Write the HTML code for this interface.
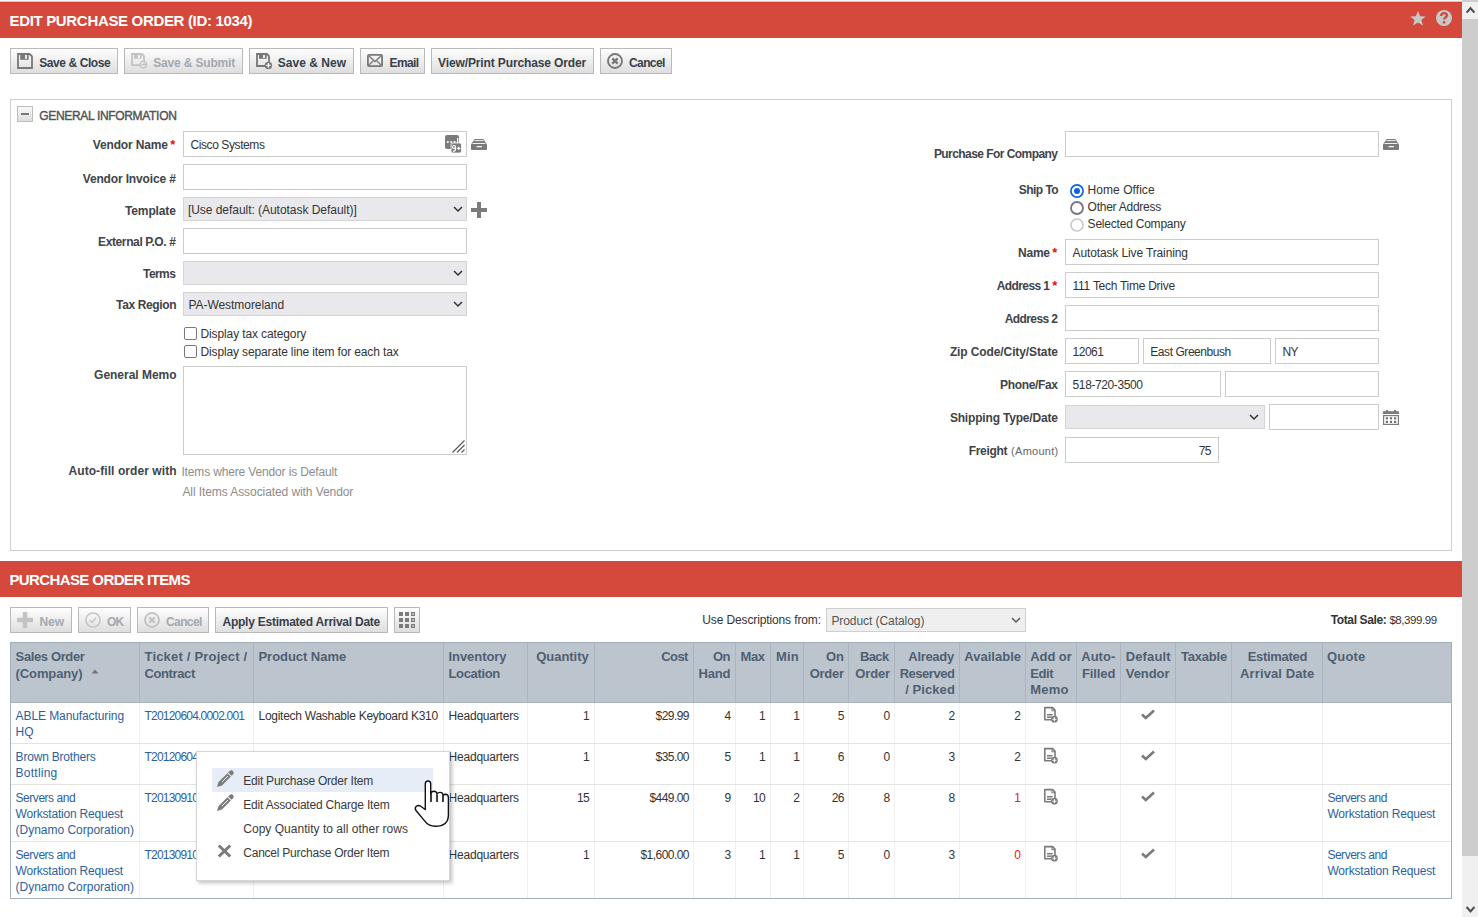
<!DOCTYPE html>
<html><head><meta charset="utf-8"><title>Edit Purchase Order</title>
<style>
html,body{margin:0;padding:0;background:#fff;overflow:hidden;width:1478px;height:917px}
body{position:relative;font-family:"Liberation Sans",sans-serif}
body>div,body>span,body>svg{position:absolute;display:block;box-sizing:border-box}
body>span{white-space:nowrap}
</style></head><body>
<div style="left:0px;top:0px;width:1462px;height:1px;background:#f4f6f7"></div>
<div style="left:0px;top:1px;width:1462px;height:1px;background:#c9d1d4"></div>
<div style="left:0px;top:2px;width:1462px;height:36px;background:#d4493b"></div>
<div style="left:0px;top:2px;width:1462px;height:1px;background:#d63d31"></div>
<span style="left:9.50px;top:12.00px;font-size:15px;line-height:18px;font-weight:bold;color:#fff;letter-spacing:-0.329px;">EDIT PURCHASE ORDER (ID: 1034)</span>
<svg style="left:1409px;top:10px" width="18" height="17" viewBox="0 0 18 17"><path d="M9 1 L11.2 6.3 L16.8 6.5 L12.4 10 L14 15.6 L9 12.4 L4 15.6 L5.6 10 L1.2 6.5 L6.8 6.3 Z" fill="#c8c8c8"/></svg>
<svg style="left:1436px;top:10px" width="16" height="16" viewBox="0 0 16 16"><circle cx="8" cy="8" r="8" fill="#c8c8c8"/><path d="M5.1 6.1 C5.1 4.2 6.5 3.1 8 3.1 C9.7 3.1 10.9 4.2 10.9 5.6 C10.9 7.5 8.1 7.6 8.1 9.6" stroke="#d4493b" stroke-width="2.3" fill="none"/><circle cx="8.1" cy="12.3" r="1.35" fill="#d4493b"/></svg>
<div style="left:1462px;top:0px;width:16px;height:917px;background:#cdcdcd"></div>
<div style="left:1462px;top:2px;width:16px;height:17px;background:#f0f0f0"></div>
<div style="left:1462px;top:856px;width:16px;height:61px;background:#f0f0f0"></div>
<svg style="left:1462px;top:2px" width="16" height="17" viewBox="0 0 16 17"><path d="M4.6 10.6 L8.5 6.2 L12.4 10.6" stroke="#505050" stroke-width="2.1" fill="none"/></svg>
<svg style="left:1462px;top:900px" width="16" height="17" viewBox="0 0 16 17"><path d="M4.6 7 L8.5 11.4 L12.4 7" stroke="#505050" stroke-width="2.1" fill="none"/></svg>
<div style="left:10px;top:48px;width:108px;height:26px;border:1px solid #b9b9b9;box-sizing:border-box;background:linear-gradient(#fefefe,#dedede)"></div>
<svg style="left:16px;top:52px" width="19" height="19" viewBox="0 0 19 19"><path d="M2 2 H13.6 L16 4.4 V16 H2 Z" stroke="#787878" stroke-width="1.8" fill="none"/><rect x="4.2" y="2" width="8.5" height="5.8" fill="#787878"/><rect x="9" y="3" width="1.9" height="3.8" fill="#f6f6f6"/></svg>
<span style="left:39.20px;top:56.00px;font-size:12px;line-height:14px;font-weight:bold;color:#38404a;letter-spacing:-0.415px;">Save &amp; Close</span>
<div style="left:124px;top:48px;width:119px;height:26px;border:1px solid #b9b9b9;box-sizing:border-box;background:linear-gradient(#fefefe,#dedede)"></div>
<svg style="left:130px;top:52px" width="19" height="19" viewBox="0 0 19 19"><path d="M10 13.1 H2 V2 H12 L14 4 V9.2" stroke="#c3c3c3" stroke-width="1.8" fill="none"/><rect x="4" y="2" width="7.7" height="4.6" fill="#c3c3c3"/><rect x="8" y="3" width="1.9" height="3" fill="#f4f4f4"/><circle cx="13.4" cy="12.6" r="3.3" stroke="#c3c3c3" stroke-width="1.3" fill="#ececec"/><path d="M11.2 12.6 H15.4 M13.6 10.8 L15.4 12.6 L13.6 14.4" stroke="#c3c3c3" stroke-width="1.1" fill="none"/></svg>
<span style="left:153.20px;top:56.00px;font-size:12px;line-height:14px;font-weight:bold;color:#a3a9b0;letter-spacing:-0.161px;">Save &amp; Submit</span>
<div style="left:249px;top:48px;width:105px;height:26px;border:1px solid #b9b9b9;box-sizing:border-box;background:linear-gradient(#fefefe,#dedede)"></div>
<svg style="left:255px;top:52px" width="19" height="19" viewBox="0 0 19 19"><path d="M10.5 14 H2 V2 H12 L14 4 V10.2" stroke="#787878" stroke-width="1.8" fill="none"/><rect x="4" y="2" width="7.7" height="4.8" fill="#787878"/><rect x="8" y="3" width="1.9" height="3" fill="#f4f4f4"/><circle cx="13.4" cy="13.4" r="3.7" fill="#787878"/><path d="M13.4 11.1 V15.7 M11.1 13.4 H15.7" stroke="#f2f2f2" stroke-width="1.4"/></svg>
<span style="left:277.80px;top:56.00px;font-size:12px;line-height:14px;font-weight:bold;color:#38404a;letter-spacing:0.022px;">Save &amp; New</span>
<div style="left:360px;top:48px;width:65px;height:26px;border:1px solid #b9b9b9;box-sizing:border-box;background:linear-gradient(#fefefe,#dedede)"></div>
<svg style="left:367px;top:54px" width="16" height="13" viewBox="0 0 16 13"><rect x="0.9" y="0.9" width="14.2" height="11.2" rx="1.2" stroke="#787878" stroke-width="1.8" fill="none"/><path d="M2 2 L8 7.5 L14 2 M1.5 11.5 L6 7 M14.5 11.5 L10 7" stroke="#787878" stroke-width="1.3" fill="none"/></svg>
<span style="left:389.50px;top:56.00px;font-size:12px;line-height:14px;font-weight:bold;color:#38404a;letter-spacing:-0.600px;">Email</span>
<div style="left:431px;top:48px;width:163px;height:26px;border:1px solid #b9b9b9;box-sizing:border-box;background:linear-gradient(#fefefe,#dedede)"></div>
<span style="left:438.10px;top:56.00px;font-size:12px;line-height:14px;font-weight:bold;color:#38404a;letter-spacing:-0.129px;">View/Print Purchase Order</span>
<div style="left:600px;top:48px;width:72px;height:26px;border:1px solid #b9b9b9;box-sizing:border-box;background:linear-gradient(#fefefe,#dedede)"></div>
<svg style="left:607px;top:53px" width="16" height="16" viewBox="0 0 16 16"><circle cx="8" cy="8" r="7" stroke="#787878" stroke-width="1.9" fill="none"/><path d="M5.3 5.3 L10.7 10.7 M10.7 5.3 L5.3 10.7" stroke="#787878" stroke-width="2.4"/></svg>
<span style="left:629.00px;top:56.00px;font-size:12px;line-height:14px;font-weight:bold;color:#38404a;letter-spacing:-0.600px;">Cancel</span>
<div style="left:10px;top:99px;width:1442px;height:452px;border:1px solid #cfcfcf"></div>
<div style="left:17px;top:106px;width:16px;height:16px;border:1px solid #bdbdbd;background:linear-gradient(#fafafa,#dcdcdc)"></div>
<div style="left:21px;top:113px;width:8px;height:2px;background:#777"></div>
<span style="left:39.20px;top:109.00px;font-size:12px;line-height:14px;font-weight:normal;color:#4f5458;letter-spacing:-0.318px;-webkit-text-stroke:0.4px #4f5458;">GENERAL INFORMATION</span>
<span style="left:92.80px;top:138.00px;font-size:12px;line-height:14px;font-weight:bold;color:#404348;letter-spacing:-0.162px;">Vendor Name</span>
<span style="left:170.20px;top:137.00px;font-size:13px;line-height:16px;font-weight:bold;color:#e01010;letter-spacing:0.000px;">*</span>
<div style="left:183px;top:131px;width:284px;height:26px;border:1px solid #cccccc;background:#fff"></div>
<span style="left:190.50px;top:138.00px;font-size:12px;line-height:14px;font-weight:normal;color:#333333;letter-spacing:-0.412px;">Cisco Systems</span>
<svg style="left:445px;top:135px" width="17" height="18" viewBox="0 0 17 18"><rect x="0" y="0" width="14" height="14" rx="2" fill="#7b7b7b"/><circle cx="2.8" cy="7" r="1.1" fill="#fff"/><circle cx="6.2" cy="7" r="1.1" fill="#fff"/><circle cx="9.6" cy="7" r="1.1" fill="#fff"/><rect x="12" y="3" width="1.3" height="5" fill="#fff"/><rect x="6" y="8" width="10.5" height="10" rx="2" fill="#7b7b7b" stroke="#fff" stroke-width="0.8"/><circle cx="9" cy="12" r="1.5" stroke="#fff" stroke-width="1.2" fill="none"/><path d="M10.5 12 V14 Q10.5 16.3 8 16.1" stroke="#fff" stroke-width="1.2" fill="none"/><path d="M12 13.4 H15.4 M13.7 11.7 V15.1" stroke="#fff" stroke-width="1.2"/></svg>
<svg style="left:471px;top:139px" width="16" height="12" viewBox="0 0 16 12"><path d="M3.6 0 H12.4 L16 5.6 V10.2 Q16 11 15.2 11 H0.8 Q0 11 0 10.2 V5.6 Z" fill="#7b7b7b"/><path d="M3.4 1.6 H12.6 M1.6 4.5 H14.4" stroke="#fff" stroke-width="0.9"/><rect x="5.6" y="7" width="5.2" height="1.2" fill="#fff"/></svg>
<span style="left:82.70px;top:172.00px;font-size:12px;line-height:14px;font-weight:bold;color:#404348;letter-spacing:-0.146px;">Vendor Invoice #</span>
<div style="left:183px;top:164px;width:284px;height:26px;border:1px solid #cccccc;background:#fff"></div>
<span style="left:125.00px;top:204.00px;font-size:12px;line-height:14px;font-weight:bold;color:#404348;letter-spacing:-0.131px;">Template</span>
<div style="left:183px;top:197px;width:284px;height:24px;border:1px solid #d4d4d4;background:#e9e9ed"></div>
<svg style="left:453px;top:205.0px" width="10" height="8" viewBox="0 0 10 8"><path d="M1 2 L5 6 L9 2" stroke="#333" stroke-width="1.5" fill="none"/></svg>
<span style="left:187.90px;top:203.00px;font-size:12px;line-height:14px;font-weight:normal;color:#333333;letter-spacing:-0.039px;">[Use default: (Autotask Default)]</span>
<svg style="left:471px;top:202px" width="16" height="16" viewBox="0 0 16 16"><rect x="6" y="0" width="4" height="16" fill="#7b7b7b"/><rect x="0" y="6" width="16" height="4" fill="#7b7b7b"/></svg>
<span style="left:98.00px;top:235.00px;font-size:12px;line-height:14px;font-weight:bold;color:#404348;letter-spacing:-0.377px;">External P.O. #</span>
<div style="left:183px;top:228px;width:284px;height:26px;border:1px solid #cccccc;background:#fff"></div>
<span style="left:143.10px;top:267.00px;font-size:12px;line-height:14px;font-weight:bold;color:#404348;letter-spacing:-0.588px;">Terms</span>
<div style="left:183px;top:261px;width:284px;height:24px;border:1px solid #d4d4d4;background:#e9e9ed"></div>
<svg style="left:453px;top:269.0px" width="10" height="8" viewBox="0 0 10 8"><path d="M1 2 L5 6 L9 2" stroke="#333" stroke-width="1.5" fill="none"/></svg>
<span style="left:116.10px;top:298.00px;font-size:12px;line-height:14px;font-weight:bold;color:#404348;letter-spacing:-0.373px;">Tax Region</span>
<div style="left:183px;top:292px;width:284px;height:24px;border:1px solid #d4d4d4;background:#e9e9ed"></div>
<svg style="left:453px;top:300.0px" width="10" height="8" viewBox="0 0 10 8"><path d="M1 2 L5 6 L9 2" stroke="#333" stroke-width="1.5" fill="none"/></svg>
<span style="left:188.40px;top:298.00px;font-size:12px;line-height:14px;font-weight:normal;color:#333333;letter-spacing:-0.042px;">PA-Westmoreland</span>
<div style="left:184px;top:327px;width:13px;height:13px;border:1.6px solid #76768a;border-radius:2px;background:#fff"></div>
<span style="left:200.50px;top:327.00px;font-size:12px;line-height:14px;font-weight:normal;color:#333333;letter-spacing:-0.118px;">Display tax category</span>
<div style="left:184px;top:345px;width:13px;height:13px;border:1.6px solid #76768a;border-radius:2px;background:#fff"></div>
<span style="left:200.50px;top:345.00px;font-size:12px;line-height:14px;font-weight:normal;color:#333333;letter-spacing:-0.138px;">Display separate line item for each tax</span>
<span style="left:94.10px;top:368.00px;font-size:12px;line-height:14px;font-weight:bold;color:#404348;letter-spacing:-0.024px;">General Memo</span>
<div style="left:183px;top:366px;width:284px;height:89px;border:1px solid #cccccc;background:#fff"></div>
<svg style="left:450px;top:438px" width="16" height="16" viewBox="0 0 16 16"><path d="M14.5 2.5 L2.5 14.5 M14.5 7 L7 14.5 M14.5 11.5 L11.5 14.5" stroke="#555" stroke-width="1.1"/></svg>
<span style="left:68.50px;top:464.00px;font-size:12px;line-height:14px;font-weight:bold;color:#404348;letter-spacing:0.073px;">Auto-fill order with</span>
<span style="left:181.40px;top:465.00px;font-size:12px;line-height:14px;font-weight:normal;color:#8c8c8c;letter-spacing:-0.148px;">Items where Vendor is Default</span>
<span style="left:182.40px;top:485.00px;font-size:12px;line-height:14px;font-weight:normal;color:#8c8c8c;letter-spacing:-0.080px;">All Items Associated with Vendor</span>
<span style="left:933.90px;top:147.00px;font-size:12px;line-height:14px;font-weight:bold;color:#404348;letter-spacing:-0.559px;">Purchase For Company</span>
<div style="left:1065px;top:131px;width:314px;height:26px;border:1px solid #cccccc;background:#fff"></div>
<svg style="left:1383px;top:139px" width="16" height="12" viewBox="0 0 16 12"><path d="M3.6 0 H12.4 L16 5.6 V10.2 Q16 11 15.2 11 H0.8 Q0 11 0 10.2 V5.6 Z" fill="#7b7b7b"/><path d="M3.4 1.6 H12.6 M1.6 4.5 H14.4" stroke="#fff" stroke-width="0.9"/><rect x="5.6" y="7" width="5.2" height="1.2" fill="#fff"/></svg>
<span style="left:1018.80px;top:183.00px;font-size:12px;line-height:14px;font-weight:bold;color:#404348;letter-spacing:-0.545px;">Ship To</span>
<svg style="left:1070px;top:184px" width="14" height="14" viewBox="0 0 14 14"><circle cx="7" cy="7" r="6.1" stroke="#0d62e4" stroke-width="1.7" fill="#fff"/><circle cx="7" cy="7" r="3" fill="#0d62e4"/></svg>
<span style="left:1087.60px;top:183.00px;font-size:12px;line-height:14px;font-weight:normal;color:#333333;letter-spacing:0.051px;">Home Office</span>
<svg style="left:1070px;top:201px" width="14" height="14" viewBox="0 0 14 14"><circle cx="7" cy="7" r="6" stroke="#767688" stroke-width="1.8" fill="#fff"/></svg>
<span style="left:1087.60px;top:200.00px;font-size:12px;line-height:14px;font-weight:normal;color:#333333;letter-spacing:-0.256px;">Other Address</span>
<svg style="left:1070px;top:218px" width="14" height="14" viewBox="0 0 14 14"><circle cx="7" cy="7" r="6" stroke="#c6c6ce" stroke-width="1.6" fill="#fff"/></svg>
<span style="left:1087.60px;top:217.00px;font-size:12px;line-height:14px;font-weight:normal;color:#333333;letter-spacing:-0.213px;">Selected Company</span>
<span style="left:1018.10px;top:246.00px;font-size:12px;line-height:14px;font-weight:bold;color:#404348;letter-spacing:-0.270px;">Name</span>
<span style="left:1052.30px;top:245.00px;font-size:13px;line-height:16px;font-weight:bold;color:#e01010;letter-spacing:0.000px;">*</span>
<div style="left:1065px;top:239px;width:314px;height:26px;border:1px solid #cccccc;background:#fff"></div>
<span style="left:1072.50px;top:246.00px;font-size:12px;line-height:14px;font-weight:normal;color:#333333;letter-spacing:-0.124px;">Autotask Live Training</span>
<span style="left:996.75px;top:279.00px;font-size:12px;line-height:14px;font-weight:bold;color:#404348;letter-spacing:-0.600px;">Address 1</span>
<span style="left:1052.30px;top:278.00px;font-size:13px;line-height:16px;font-weight:bold;color:#e01010;letter-spacing:0.000px;">*</span>
<div style="left:1065px;top:272px;width:314px;height:26px;border:1px solid #cccccc;background:#fff"></div>
<span style="left:1072.60px;top:279.00px;font-size:12px;line-height:14px;font-weight:normal;color:#333333;letter-spacing:-0.269px;">111 Tech Time Drive</span>
<span style="left:1004.75px;top:312.00px;font-size:12px;line-height:14px;font-weight:bold;color:#404348;letter-spacing:-0.600px;">Address 2</span>
<div style="left:1065px;top:305px;width:314px;height:26px;border:1px solid #cccccc;background:#fff"></div>
<span style="left:949.90px;top:345.00px;font-size:12px;line-height:14px;font-weight:bold;color:#404348;letter-spacing:-0.108px;">Zip Code/City/State</span>
<div style="left:1065px;top:338px;width:74px;height:26px;border:1px solid #cccccc;background:#fff"></div>
<span style="left:1072.60px;top:345.00px;font-size:12px;line-height:14px;font-weight:normal;color:#333333;letter-spacing:-0.500px;">12061</span>
<div style="left:1143px;top:338px;width:128px;height:26px;border:1px solid #cccccc;background:#fff"></div>
<span style="left:1150.30px;top:345.00px;font-size:12px;line-height:14px;font-weight:normal;color:#333333;letter-spacing:-0.442px;">East Greenbush</span>
<div style="left:1275px;top:338px;width:104px;height:26px;border:1px solid #cccccc;background:#fff"></div>
<span style="left:1282.40px;top:345.00px;font-size:12px;line-height:14px;font-weight:normal;color:#333333;letter-spacing:-0.600px;">NY</span>
<span style="left:1000.00px;top:378.00px;font-size:12px;line-height:14px;font-weight:bold;color:#404348;letter-spacing:-0.338px;">Phone/Fax</span>
<div style="left:1065px;top:371px;width:156px;height:26px;border:1px solid #cccccc;background:#fff"></div>
<span style="left:1072.60px;top:378.00px;font-size:12px;line-height:14px;font-weight:normal;color:#333333;letter-spacing:-0.400px;">518-720-3500</span>
<div style="left:1225px;top:371px;width:154px;height:26px;border:1px solid #cccccc;background:#fff"></div>
<span style="left:949.90px;top:411.00px;font-size:12px;line-height:14px;font-weight:bold;color:#404348;letter-spacing:-0.179px;">Shipping Type/Date</span>
<div style="left:1065px;top:405px;width:200px;height:24px;border:1px solid #d4d4d4;background:#e9e9ed"></div>
<svg style="left:1249px;top:413.0px" width="10" height="8" viewBox="0 0 10 8"><path d="M1 2 L5 6 L9 2" stroke="#333" stroke-width="1.5" fill="none"/></svg>
<div style="left:1269px;top:404px;width:110px;height:26px;border:1px solid #cccccc;background:#fff"></div>
<svg style="left:1383px;top:410px" width="16" height="15" viewBox="0 0 16 15"><rect x="3" y="0" width="2" height="2" fill="#7b7b7b"/><rect x="11" y="0" width="2" height="2" fill="#7b7b7b"/><rect x="0" y="1.2" width="16" height="2.8" fill="#7b7b7b"/><rect x="0.6" y="5.6" width="14.8" height="8.8" stroke="#7b7b7b" stroke-width="1.2" fill="none"/><g fill="#707070"><rect x="2.8" y="7.2" width="2.2" height="2.2"/><rect x="6.9" y="7.2" width="2.2" height="2.2"/><rect x="11" y="7.2" width="2.2" height="2.2"/><rect x="2.8" y="10.8" width="2.2" height="2.2"/><rect x="6.9" y="10.8" width="2.2" height="2.2"/><rect x="11" y="10.8" width="2.2" height="2.2"/></g></svg>
<span style="left:968.80px;top:444.00px;font-size:12px;line-height:14px;font-weight:bold;color:#404348;letter-spacing:-0.345px;">Freight</span>
<span style="left:1011.10px;top:445.00px;font-size:11px;line-height:13px;font-weight:normal;color:#666;letter-spacing:0.275px;">(Amount)</span>
<div style="left:1065px;top:437px;width:154px;height:26px;border:1px solid #cccccc;background:#fff"></div>
<span style="left:1198.63px;top:444.00px;font-size:12px;line-height:14px;font-weight:normal;color:#333333;letter-spacing:-0.500px;">75</span>
<div style="left:0px;top:561px;width:1462px;height:36px;background:#d4493b"></div>
<span style="left:9.40px;top:571.00px;font-size:15px;line-height:18px;font-weight:bold;color:#fff;letter-spacing:-0.600px;">PURCHASE ORDER ITEMS</span>
<div style="left:10px;top:607px;width:62px;height:26px;border:1px solid #b9b9b9;box-sizing:border-box;background:linear-gradient(#fefefe,#dedede)"></div>
<svg style="left:17px;top:612px" width="16" height="16" viewBox="0 0 16 16"><rect x="5.8" y="0" width="4.4" height="16" fill="#c3c3c3"/><rect x="0" y="5.8" width="16" height="4.4" fill="#c3c3c3"/></svg>
<span style="left:39.40px;top:615.00px;font-size:12px;line-height:14px;font-weight:bold;color:#a3a9b0;letter-spacing:0.030px;">New</span>
<div style="left:78px;top:607px;width:53px;height:26px;border:1px solid #b9b9b9;box-sizing:border-box;background:linear-gradient(#fefefe,#dedede)"></div>
<svg style="left:85px;top:612px" width="16" height="16" viewBox="0 0 16 16"><circle cx="8" cy="8" r="7.1" stroke="#c3c3c3" stroke-width="1.5" fill="none"/><path d="M4.8 8.2 L7 10.4 L11.2 5.6" stroke="#c3c3c3" stroke-width="1.3" fill="none"/></svg>
<span style="left:106.90px;top:615.00px;font-size:12px;line-height:14px;font-weight:bold;color:#a3a9b0;letter-spacing:-0.600px;">OK</span>
<div style="left:137px;top:607px;width:72px;height:26px;border:1px solid #b9b9b9;box-sizing:border-box;background:linear-gradient(#fefefe,#dedede)"></div>
<svg style="left:144px;top:612px" width="16" height="16" viewBox="0 0 16 16"><circle cx="8" cy="8" r="7" stroke="#c3c3c3" stroke-width="1.9" fill="none"/><path d="M5.3 5.3 L10.7 10.7 M10.7 5.3 L5.3 10.7" stroke="#c3c3c3" stroke-width="2.4"/></svg>
<span style="left:166.00px;top:615.00px;font-size:12px;line-height:14px;font-weight:bold;color:#a3a9b0;letter-spacing:-0.600px;">Cancel</span>
<div style="left:215px;top:607px;width:173px;height:26px;border:1px solid #b9b9b9;box-sizing:border-box;background:linear-gradient(#fefefe,#dedede)"></div>
<span style="left:222.50px;top:615.00px;font-size:12px;line-height:14px;font-weight:bold;color:#38404a;letter-spacing:-0.242px;">Apply Estimated Arrival Date</span>
<div style="left:394px;top:607px;width:26px;height:26px;border:1px solid #b9b9b9;box-sizing:border-box;background:linear-gradient(#fefefe,#dedede)"></div>
<svg style="left:399px;top:612px" width="16" height="16" viewBox="0 0 16 16"><g fill="#7b7b7b"><rect x="0" y="0" width="4" height="4"/><rect x="6" y="0" width="4" height="4"/><rect x="0" y="6" width="4" height="4"/><rect x="6" y="6" width="4" height="4"/><rect x="0" y="12" width="4" height="4"/><rect x="6" y="12" width="4" height="4"/></g><g stroke="#7b7b7b" stroke-width="1.3" fill="none"><rect x="12.6" y="0.6" width="2.8" height="2.8"/><rect x="12.6" y="6.6" width="2.8" height="2.8"/><rect x="12.6" y="12.6" width="2.8" height="2.8"/></g></svg>
<span style="left:702.30px;top:613.00px;font-size:12px;line-height:14px;font-weight:normal;color:#333333;letter-spacing:-0.125px;">Use Descriptions from:</span>
<div style="left:826px;top:608px;width:200px;height:24px;border:1px solid #cfcfcf;background:#efefef"></div>
<span style="left:831.40px;top:614.00px;font-size:12px;line-height:14px;font-weight:normal;color:#555;letter-spacing:-0.065px;">Product (Catalog)</span>
<svg style="left:1011px;top:616px" width="10" height="8" viewBox="0 0 10 8"><path d="M1 2 L5 6 L9 2" stroke="#555" stroke-width="1.4" fill="none"/></svg>
<span style="left:1330.70px;top:613.00px;font-size:12px;line-height:14px;font-weight:bold;color:#333;letter-spacing:-0.369px;">Total Sale:</span>
<span style="left:1389.40px;top:613.00px;font-size:11.5px;line-height:14px;font-weight:normal;color:#333;letter-spacing:-0.433px;">$8,399.99</span>
<div style="left:10px;top:642px;width:1442px;height:257px;background:#fff"></div>
<div style="left:10px;top:642px;width:1442px;height:61px;background:#bcc5cd"></div>
<div style="left:10px;top:642px;width:1442px;height:1px;background:#a3afba"></div>
<div style="left:10px;top:702px;width:1442px;height:1px;background:#a9b4be"></div>
<div style="left:139px;top:643px;width:1px;height:59px;background:#a9b4bf"></div>
<div style="left:139px;top:703px;width:1px;height:195px;background:#f0f0f0"></div>
<div style="left:253px;top:643px;width:1px;height:59px;background:#a9b4bf"></div>
<div style="left:253px;top:703px;width:1px;height:195px;background:#f0f0f0"></div>
<div style="left:443px;top:643px;width:1px;height:59px;background:#a9b4bf"></div>
<div style="left:443px;top:703px;width:1px;height:195px;background:#f0f0f0"></div>
<div style="left:527px;top:643px;width:1px;height:59px;background:#a9b4bf"></div>
<div style="left:527px;top:703px;width:1px;height:195px;background:#f0f0f0"></div>
<div style="left:594px;top:643px;width:1px;height:59px;background:#a9b4bf"></div>
<div style="left:594px;top:703px;width:1px;height:195px;background:#f0f0f0"></div>
<div style="left:693px;top:643px;width:1px;height:59px;background:#a9b4bf"></div>
<div style="left:693px;top:703px;width:1px;height:195px;background:#f0f0f0"></div>
<div style="left:735px;top:643px;width:1px;height:59px;background:#a9b4bf"></div>
<div style="left:735px;top:703px;width:1px;height:195px;background:#f0f0f0"></div>
<div style="left:770px;top:643px;width:1px;height:59px;background:#a9b4bf"></div>
<div style="left:770px;top:703px;width:1px;height:195px;background:#f0f0f0"></div>
<div style="left:803px;top:643px;width:1px;height:59px;background:#a9b4bf"></div>
<div style="left:803px;top:703px;width:1px;height:195px;background:#f0f0f0"></div>
<div style="left:848px;top:643px;width:1px;height:59px;background:#a9b4bf"></div>
<div style="left:848px;top:703px;width:1px;height:195px;background:#f0f0f0"></div>
<div style="left:894px;top:643px;width:1px;height:59px;background:#a9b4bf"></div>
<div style="left:894px;top:703px;width:1px;height:195px;background:#f0f0f0"></div>
<div style="left:959px;top:643px;width:1px;height:59px;background:#a9b4bf"></div>
<div style="left:959px;top:703px;width:1px;height:195px;background:#f0f0f0"></div>
<div style="left:1025px;top:643px;width:1px;height:59px;background:#a9b4bf"></div>
<div style="left:1025px;top:703px;width:1px;height:195px;background:#f0f0f0"></div>
<div style="left:1076px;top:643px;width:1px;height:59px;background:#a9b4bf"></div>
<div style="left:1076px;top:703px;width:1px;height:195px;background:#f0f0f0"></div>
<div style="left:1120px;top:643px;width:1px;height:59px;background:#a9b4bf"></div>
<div style="left:1120px;top:703px;width:1px;height:195px;background:#f0f0f0"></div>
<div style="left:1175px;top:643px;width:1px;height:59px;background:#a9b4bf"></div>
<div style="left:1175px;top:703px;width:1px;height:195px;background:#f0f0f0"></div>
<div style="left:1231px;top:643px;width:1px;height:59px;background:#a9b4bf"></div>
<div style="left:1231px;top:703px;width:1px;height:195px;background:#f0f0f0"></div>
<div style="left:1322px;top:643px;width:1px;height:59px;background:#a9b4bf"></div>
<div style="left:1322px;top:703px;width:1px;height:195px;background:#f0f0f0"></div>
<div style="left:11px;top:743px;width:1440px;height:1px;background:#e3e3e3"></div>
<div style="left:11px;top:784px;width:1440px;height:1px;background:#e3e3e3"></div>
<div style="left:11px;top:841px;width:1440px;height:1px;background:#e3e3e3"></div>
<div style="left:10px;top:642px;width:1px;height:257px;background:#a3afba"></div>
<div style="left:1451px;top:642px;width:1px;height:257px;background:#a3afba"></div>
<div style="left:10px;top:898px;width:1442px;height:1px;background:#a3afba"></div>
<span style="left:15.60px;top:649.00px;font-size:13px;line-height:16px;font-weight:bold;color:#4f5f73;letter-spacing:-0.373px;">Sales Order</span>
<span style="left:15.60px;top:666.00px;font-size:13px;line-height:16px;font-weight:bold;color:#4f5f73;letter-spacing:-0.120px;">(Company)</span>
<svg style="left:91px;top:669px" width="8" height="5" viewBox="0 0 8 5"><path d="M0.5 4.5 L4 0.5 L7.5 4.5 Z" fill="#767676"/></svg>
<span style="left:144.50px;top:649.00px;font-size:13px;line-height:16px;font-weight:bold;color:#4f5f73;letter-spacing:0.191px;">Ticket / Project /</span>
<span style="left:144.50px;top:666.00px;font-size:13px;line-height:16px;font-weight:bold;color:#4f5f73;letter-spacing:-0.388px;">Contract</span>
<span style="left:258.50px;top:649.00px;font-size:13px;line-height:16px;font-weight:bold;color:#4f5f73;letter-spacing:-0.046px;">Product Name</span>
<span style="left:448.50px;top:649.00px;font-size:13px;line-height:16px;font-weight:bold;color:#4f5f73;letter-spacing:-0.060px;">Inventory</span>
<span style="left:448.50px;top:666.00px;font-size:13px;line-height:16px;font-weight:bold;color:#4f5f73;letter-spacing:-0.346px;">Location</span>
<span style="left:536.20px;top:649.00px;font-size:13px;line-height:16px;font-weight:bold;color:#4f5f73;letter-spacing:-0.028px;">Quantity</span>
<span style="left:661.34px;top:649.00px;font-size:13px;line-height:16px;font-weight:bold;color:#4f5f73;letter-spacing:-0.600px;">Cost</span>
<span style="left:713.09px;top:649.00px;font-size:13px;line-height:16px;font-weight:bold;color:#4f5f73;letter-spacing:-0.600px;">On</span>
<span style="left:698.60px;top:666.00px;font-size:13px;line-height:16px;font-weight:bold;color:#4f5f73;letter-spacing:-0.186px;">Hand</span>
<span style="left:740.60px;top:649.00px;font-size:13px;line-height:16px;font-weight:bold;color:#4f5f73;letter-spacing:-0.430px;">Max</span>
<span style="left:775.90px;top:649.00px;font-size:13px;line-height:16px;font-weight:bold;color:#4f5f73;letter-spacing:0.180px;">Min</span>
<span style="left:826.00px;top:649.00px;font-size:13px;line-height:16px;font-weight:bold;color:#4f5f73;letter-spacing:-0.112px;">On</span>
<span style="left:809.70px;top:666.00px;font-size:13px;line-height:16px;font-weight:bold;color:#4f5f73;letter-spacing:-0.260px;">Order</span>
<span style="left:859.95px;top:649.00px;font-size:13px;line-height:16px;font-weight:bold;color:#4f5f73;letter-spacing:-0.600px;">Back</span>
<span style="left:855.30px;top:666.00px;font-size:13px;line-height:16px;font-weight:bold;color:#4f5f73;letter-spacing:-0.160px;">Order</span>
<span style="left:908.30px;top:649.00px;font-size:13px;line-height:16px;font-weight:bold;color:#4f5f73;letter-spacing:-0.310px;">Already</span>
<span style="left:899.70px;top:666.00px;font-size:13px;line-height:16px;font-weight:bold;color:#4f5f73;letter-spacing:-0.485px;">Reserved</span>
<span style="left:905.20px;top:682.00px;font-size:13px;line-height:16px;font-weight:bold;color:#4f5f73;letter-spacing:0.072px;">/ Picked</span>
<span style="left:964.30px;top:649.00px;font-size:13px;line-height:16px;font-weight:bold;color:#4f5f73;letter-spacing:0.016px;">Available</span>
<span style="left:1030.30px;top:649.00px;font-size:13px;line-height:16px;font-weight:bold;color:#4f5f73;letter-spacing:-0.085px;">Add or</span>
<span style="left:1030.30px;top:666.00px;font-size:13px;line-height:16px;font-weight:bold;color:#4f5f73;letter-spacing:-0.408px;">Edit</span>
<span style="left:1030.30px;top:682.00px;font-size:13px;line-height:16px;font-weight:bold;color:#4f5f73;letter-spacing:0.161px;">Memo</span>
<span style="left:1081.20px;top:649.00px;font-size:13px;line-height:16px;font-weight:bold;color:#4f5f73;letter-spacing:0.050px;">Auto-</span>
<span style="left:1082.00px;top:666.00px;font-size:13px;line-height:16px;font-weight:bold;color:#4f5f73;letter-spacing:-0.101px;">Filled</span>
<span style="left:1125.75px;top:649.00px;font-size:13px;line-height:16px;font-weight:bold;color:#4f5f73;letter-spacing:0.112px;">Default</span>
<span style="left:1125.80px;top:666.00px;font-size:13px;line-height:16px;font-weight:bold;color:#4f5f73;letter-spacing:-0.061px;">Vendor</span>
<span style="left:1181.00px;top:649.00px;font-size:13px;line-height:16px;font-weight:bold;color:#4f5f73;letter-spacing:-0.203px;">Taxable</span>
<span style="left:1247.70px;top:649.00px;font-size:13px;line-height:16px;font-weight:bold;color:#4f5f73;letter-spacing:-0.299px;">Estimated</span>
<span style="left:1240.10px;top:666.00px;font-size:13px;line-height:16px;font-weight:bold;color:#4f5f73;letter-spacing:0.105px;">Arrival Date</span>
<span style="left:1327.00px;top:649.00px;font-size:13px;line-height:16px;font-weight:bold;color:#4f5f73;letter-spacing:0.169px;">Quote</span>
<span style="left:15.60px;top:709.00px;font-size:12px;line-height:14px;font-weight:normal;color:#2d5f9e;letter-spacing:-0.093px;">ABLE Manufacturing</span>
<span style="left:15.60px;top:725.00px;font-size:12px;line-height:14px;font-weight:normal;color:#2d5f9e;letter-spacing:-0.066px;">HQ</span>
<span style="left:144.50px;top:709.00px;font-size:12px;line-height:14px;font-weight:normal;color:#2d5f9e;letter-spacing:-0.800px;">T20120604.0002.001</span>
<span style="left:258.50px;top:709.00px;font-size:12px;line-height:14px;font-weight:normal;color:#333333;letter-spacing:-0.267px;">Logitech Washable Keyboard K310</span>
<span style="left:15.60px;top:750.00px;font-size:12px;line-height:14px;font-weight:normal;color:#2d5f9e;letter-spacing:-0.200px;">Brown Brothers</span>
<span style="left:15.60px;top:766.00px;font-size:12px;line-height:14px;font-weight:normal;color:#2d5f9e;letter-spacing:0.235px;">Bottling</span>
<span style="left:144.50px;top:750.00px;font-size:12px;line-height:14px;font-weight:normal;color:#2d5f9e;letter-spacing:-0.800px;">T20120604.0003.001</span>
<span style="left:15.60px;top:791.00px;font-size:12px;line-height:14px;font-weight:normal;color:#2d5f9e;letter-spacing:-0.473px;">Servers and</span>
<span style="left:15.60px;top:807.00px;font-size:12px;line-height:14px;font-weight:normal;color:#2d5f9e;letter-spacing:-0.207px;">Workstation Request</span>
<span style="left:15.60px;top:823.00px;font-size:12px;line-height:14px;font-weight:normal;color:#2d5f9e;letter-spacing:-0.017px;">(Dynamo Corporation)</span>
<span style="left:144.50px;top:791.00px;font-size:12px;line-height:14px;font-weight:normal;color:#2d5f9e;letter-spacing:-0.800px;">T20130910.0001.001</span>
<span style="left:15.60px;top:848.00px;font-size:12px;line-height:14px;font-weight:normal;color:#2d5f9e;letter-spacing:-0.473px;">Servers and</span>
<span style="left:15.60px;top:864.00px;font-size:12px;line-height:14px;font-weight:normal;color:#2d5f9e;letter-spacing:-0.207px;">Workstation Request</span>
<span style="left:15.60px;top:880.00px;font-size:12px;line-height:14px;font-weight:normal;color:#2d5f9e;letter-spacing:-0.017px;">(Dynamo Corporation)</span>
<span style="left:144.50px;top:848.00px;font-size:12px;line-height:14px;font-weight:normal;color:#2d5f9e;letter-spacing:-0.800px;">T20130910.0001.001</span>
<span style="left:448.50px;top:709.00px;font-size:12px;line-height:14px;font-weight:normal;color:#333333;letter-spacing:-0.201px;">Headquarters</span>
<span style="left:583.00px;top:709.00px;font-size:12px;line-height:14px;font-weight:normal;color:#333333;letter-spacing:-0.550px;">1</span>
<span style="left:655.52px;top:709.00px;font-size:12px;line-height:14px;font-weight:normal;color:#333333;letter-spacing:-0.550px;">$29.99</span>
<span style="left:724.60px;top:709.00px;font-size:12px;line-height:14px;font-weight:normal;color:#333333;letter-spacing:-0.550px;">4</span>
<span style="left:759.00px;top:709.00px;font-size:12px;line-height:14px;font-weight:normal;color:#333333;letter-spacing:-0.550px;">1</span>
<span style="left:793.20px;top:709.00px;font-size:12px;line-height:14px;font-weight:normal;color:#333333;letter-spacing:-0.550px;">1</span>
<span style="left:837.80px;top:709.00px;font-size:12px;line-height:14px;font-weight:normal;color:#333333;letter-spacing:-0.550px;">5</span>
<span style="left:883.40px;top:709.00px;font-size:12px;line-height:14px;font-weight:normal;color:#333333;letter-spacing:-0.550px;">0</span>
<span style="left:948.40px;top:709.00px;font-size:12px;line-height:14px;font-weight:normal;color:#333333;letter-spacing:-0.550px;">2</span>
<span style="left:1014.20px;top:709.00px;font-size:12px;line-height:14px;font-weight:normal;color:#333333;letter-spacing:-0.550px;">2</span>
<svg style="left:1044px;top:706px" width="16" height="17" viewBox="0 0 16 17"><path d="M7.4 13.8 H0.8 V1.6 H8.6 L11 4.1 V10.2" stroke="#7b7b7b" stroke-width="1.6" fill="none" stroke-linejoin="round"/><path d="M8 1.8 V4.7 H11" stroke="#7b7b7b" stroke-width="1.1" fill="none"/><rect x="3" y="8" width="5.8" height="1.1" fill="#7b7b7b"/><rect x="3" y="9.1" width="5" height="1.8" fill="#b5b5b5"/><rect x="3" y="10.9" width="4.2" height="1.1" fill="#7b7b7b"/><circle cx="10.4" cy="13.2" r="3.4" fill="#7b7b7b"/><path d="M10.4 11.2 V15.2 M8.4 13.2 H12.4" stroke="#fff" stroke-width="1.1"/></svg>
<svg style="left:1141px;top:709px" width="14" height="11" viewBox="0 0 14 11"><path d="M1 5.5 L4.8 9 L13 1.5" stroke="#7b7b7b" stroke-width="2.6" fill="none"/></svg>
<span style="left:448.50px;top:750.00px;font-size:12px;line-height:14px;font-weight:normal;color:#333333;letter-spacing:-0.201px;">Headquarters</span>
<span style="left:583.00px;top:750.00px;font-size:12px;line-height:14px;font-weight:normal;color:#333333;letter-spacing:-0.550px;">1</span>
<span style="left:655.52px;top:750.00px;font-size:12px;line-height:14px;font-weight:normal;color:#333333;letter-spacing:-0.550px;">$35.00</span>
<span style="left:724.60px;top:750.00px;font-size:12px;line-height:14px;font-weight:normal;color:#333333;letter-spacing:-0.550px;">5</span>
<span style="left:759.00px;top:750.00px;font-size:12px;line-height:14px;font-weight:normal;color:#333333;letter-spacing:-0.550px;">1</span>
<span style="left:793.20px;top:750.00px;font-size:12px;line-height:14px;font-weight:normal;color:#333333;letter-spacing:-0.550px;">1</span>
<span style="left:837.80px;top:750.00px;font-size:12px;line-height:14px;font-weight:normal;color:#333333;letter-spacing:-0.550px;">6</span>
<span style="left:883.40px;top:750.00px;font-size:12px;line-height:14px;font-weight:normal;color:#333333;letter-spacing:-0.550px;">0</span>
<span style="left:948.40px;top:750.00px;font-size:12px;line-height:14px;font-weight:normal;color:#333333;letter-spacing:-0.550px;">3</span>
<span style="left:1014.20px;top:750.00px;font-size:12px;line-height:14px;font-weight:normal;color:#333333;letter-spacing:-0.550px;">2</span>
<svg style="left:1044px;top:747px" width="16" height="17" viewBox="0 0 16 17"><path d="M7.4 13.8 H0.8 V1.6 H8.6 L11 4.1 V10.2" stroke="#7b7b7b" stroke-width="1.6" fill="none" stroke-linejoin="round"/><path d="M8 1.8 V4.7 H11" stroke="#7b7b7b" stroke-width="1.1" fill="none"/><rect x="3" y="8" width="5.8" height="1.1" fill="#7b7b7b"/><rect x="3" y="9.1" width="5" height="1.8" fill="#b5b5b5"/><rect x="3" y="10.9" width="4.2" height="1.1" fill="#7b7b7b"/><circle cx="10.4" cy="13.2" r="3.4" fill="#7b7b7b"/><path d="M10.4 11.2 V15.2 M8.4 13.2 H12.4" stroke="#fff" stroke-width="1.1"/></svg>
<svg style="left:1141px;top:750px" width="14" height="11" viewBox="0 0 14 11"><path d="M1 5.5 L4.8 9 L13 1.5" stroke="#7b7b7b" stroke-width="2.6" fill="none"/></svg>
<span style="left:448.50px;top:791.00px;font-size:12px;line-height:14px;font-weight:normal;color:#333333;letter-spacing:-0.201px;">Headquarters</span>
<span style="left:576.88px;top:791.00px;font-size:12px;line-height:14px;font-weight:normal;color:#333333;letter-spacing:-0.550px;">15</span>
<span style="left:649.40px;top:791.00px;font-size:12px;line-height:14px;font-weight:normal;color:#333333;letter-spacing:-0.550px;">$449.00</span>
<span style="left:724.60px;top:791.00px;font-size:12px;line-height:14px;font-weight:normal;color:#333333;letter-spacing:-0.550px;">9</span>
<span style="left:752.88px;top:791.00px;font-size:12px;line-height:14px;font-weight:normal;color:#333333;letter-spacing:-0.550px;">10</span>
<span style="left:793.20px;top:791.00px;font-size:12px;line-height:14px;font-weight:normal;color:#333333;letter-spacing:-0.550px;">2</span>
<span style="left:831.68px;top:791.00px;font-size:12px;line-height:14px;font-weight:normal;color:#333333;letter-spacing:-0.550px;">26</span>
<span style="left:883.40px;top:791.00px;font-size:12px;line-height:14px;font-weight:normal;color:#333333;letter-spacing:-0.550px;">8</span>
<span style="left:948.40px;top:791.00px;font-size:12px;line-height:14px;font-weight:normal;color:#333333;letter-spacing:-0.550px;">8</span>
<span style="left:1014.20px;top:791.00px;font-size:12px;line-height:14px;font-weight:normal;color:#e8202a;letter-spacing:-0.550px;">1</span>
<svg style="left:1044px;top:788px" width="16" height="17" viewBox="0 0 16 17"><path d="M7.4 13.8 H0.8 V1.6 H8.6 L11 4.1 V10.2" stroke="#7b7b7b" stroke-width="1.6" fill="none" stroke-linejoin="round"/><path d="M8 1.8 V4.7 H11" stroke="#7b7b7b" stroke-width="1.1" fill="none"/><rect x="3" y="8" width="5.8" height="1.1" fill="#7b7b7b"/><rect x="3" y="9.1" width="5" height="1.8" fill="#b5b5b5"/><rect x="3" y="10.9" width="4.2" height="1.1" fill="#7b7b7b"/><circle cx="10.4" cy="13.2" r="3.4" fill="#7b7b7b"/><path d="M10.4 11.2 V15.2 M8.4 13.2 H12.4" stroke="#fff" stroke-width="1.1"/></svg>
<svg style="left:1141px;top:791px" width="14" height="11" viewBox="0 0 14 11"><path d="M1 5.5 L4.8 9 L13 1.5" stroke="#7b7b7b" stroke-width="2.6" fill="none"/></svg>
<span style="left:448.50px;top:848.00px;font-size:12px;line-height:14px;font-weight:normal;color:#333333;letter-spacing:-0.201px;">Headquarters</span>
<span style="left:583.00px;top:848.00px;font-size:12px;line-height:14px;font-weight:normal;color:#333333;letter-spacing:-0.550px;">1</span>
<span style="left:640.49px;top:848.00px;font-size:12px;line-height:14px;font-weight:normal;color:#333333;letter-spacing:-0.550px;">$1,600.00</span>
<span style="left:724.60px;top:848.00px;font-size:12px;line-height:14px;font-weight:normal;color:#333333;letter-spacing:-0.550px;">3</span>
<span style="left:759.00px;top:848.00px;font-size:12px;line-height:14px;font-weight:normal;color:#333333;letter-spacing:-0.550px;">1</span>
<span style="left:793.20px;top:848.00px;font-size:12px;line-height:14px;font-weight:normal;color:#333333;letter-spacing:-0.550px;">1</span>
<span style="left:837.80px;top:848.00px;font-size:12px;line-height:14px;font-weight:normal;color:#333333;letter-spacing:-0.550px;">5</span>
<span style="left:883.40px;top:848.00px;font-size:12px;line-height:14px;font-weight:normal;color:#333333;letter-spacing:-0.550px;">0</span>
<span style="left:948.40px;top:848.00px;font-size:12px;line-height:14px;font-weight:normal;color:#333333;letter-spacing:-0.550px;">3</span>
<span style="left:1014.20px;top:848.00px;font-size:12px;line-height:14px;font-weight:normal;color:#e8202a;letter-spacing:-0.550px;">0</span>
<svg style="left:1044px;top:845px" width="16" height="17" viewBox="0 0 16 17"><path d="M7.4 13.8 H0.8 V1.6 H8.6 L11 4.1 V10.2" stroke="#7b7b7b" stroke-width="1.6" fill="none" stroke-linejoin="round"/><path d="M8 1.8 V4.7 H11" stroke="#7b7b7b" stroke-width="1.1" fill="none"/><rect x="3" y="8" width="5.8" height="1.1" fill="#7b7b7b"/><rect x="3" y="9.1" width="5" height="1.8" fill="#b5b5b5"/><rect x="3" y="10.9" width="4.2" height="1.1" fill="#7b7b7b"/><circle cx="10.4" cy="13.2" r="3.4" fill="#7b7b7b"/><path d="M10.4 11.2 V15.2 M8.4 13.2 H12.4" stroke="#fff" stroke-width="1.1"/></svg>
<svg style="left:1141px;top:848px" width="14" height="11" viewBox="0 0 14 11"><path d="M1 5.5 L4.8 9 L13 1.5" stroke="#7b7b7b" stroke-width="2.6" fill="none"/></svg>
<span style="left:1327.40px;top:791.00px;font-size:12px;line-height:14px;font-weight:normal;color:#2d5f9e;letter-spacing:-0.473px;">Servers and</span>
<span style="left:1327.40px;top:807.00px;font-size:12px;line-height:14px;font-weight:normal;color:#2d5f9e;letter-spacing:-0.179px;">Workstation Request</span>
<span style="left:1327.40px;top:848.00px;font-size:12px;line-height:14px;font-weight:normal;color:#2d5f9e;letter-spacing:-0.473px;">Servers and</span>
<span style="left:1327.40px;top:864.00px;font-size:12px;line-height:14px;font-weight:normal;color:#2d5f9e;letter-spacing:-0.179px;">Workstation Request</span>
<div style="left:196px;top:751px;width:254px;height:130px;background:#fff;border:1px solid #d6d6d6;box-shadow:2px 2px 4px rgba(0,0,0,0.25)"></div>
<div style="left:212px;top:768px;width:221px;height:24px;background:#e6edf7"></div>
<span style="left:243.30px;top:774.00px;font-size:12px;line-height:14px;font-weight:normal;color:#3a3a3a;letter-spacing:-0.239px;">Edit Purchase Order Item</span>
<span style="left:243.30px;top:798.00px;font-size:12px;line-height:14px;font-weight:normal;color:#3a3a3a;letter-spacing:-0.191px;">Edit Associated Charge Item</span>
<span style="left:243.30px;top:822.00px;font-size:12px;line-height:14px;font-weight:normal;color:#3a3a3a;letter-spacing:0.021px;">Copy Quantity to all other rows</span>
<span style="left:243.30px;top:846.00px;font-size:12px;line-height:14px;font-weight:normal;color:#3a3a3a;letter-spacing:-0.235px;">Cancel Purchase Order Item</span>
<svg style="left:215px;top:769px" width="20" height="20" viewBox="0 0 20 20"><g transform="translate(2,18) rotate(-45)"><path d="M0 0 L4.6 -2.4 H17.2 V2.4 H4.6 Z" fill="#7b7b7b"/><path d="M6.8 0 H15.6" stroke="#fff" stroke-width="0.9"/><path d="M18.2 -2.4 H20.2 A2.4 2.4 0 0 1 20.2 2.4 H18.2 Z" fill="#7b7b7b"/></g></svg>
<svg style="left:215px;top:793px" width="20" height="20" viewBox="0 0 20 20"><g transform="translate(2,18) rotate(-45)"><path d="M0 0 L4.6 -2.4 H17.2 V2.4 H4.6 Z" fill="#7b7b7b"/><path d="M6.8 0 H15.6" stroke="#fff" stroke-width="0.9"/><path d="M18.2 -2.4 H20.2 A2.4 2.4 0 0 1 20.2 2.4 H18.2 Z" fill="#7b7b7b"/></g></svg>
<svg style="left:217px;top:844px" width="15" height="14" viewBox="0 0 15 14"><path d="M1.8 1.5 L13.2 12.5 M13.2 1.5 L1.8 12.5" stroke="#7b7b7b" stroke-width="3"/></svg>
<svg style="left:410px;top:775px" width="45" height="55" viewBox="0 0 45 55"><path d="M15.3 34.5 V9 Q15.3 6 18 6 Q20.7 6 20.7 9 V19 Q21.5 16.2 24 16.2 Q26.5 16.2 27 19 Q27.8 17.4 30.2 17.4 Q32.6 17.4 33 20.2 Q33.8 19.2 36 19.2 Q38.4 19.5 38.4 22.5 V40 Q38.4 51.3 25.2 51.3 Q18.5 51.3 14.4 45.6 L6 35.5 Q4.3 33 6.3 31.2 Q8.3 29.8 10.6 31.2 Z" fill="#fff" stroke="#111" stroke-width="1.4" stroke-linejoin="round"/><path d="M21 19 V27 M27 19.5 V27 M33 20.5 V27" stroke="#111" stroke-width="1.6"/></svg>
</body></html>
